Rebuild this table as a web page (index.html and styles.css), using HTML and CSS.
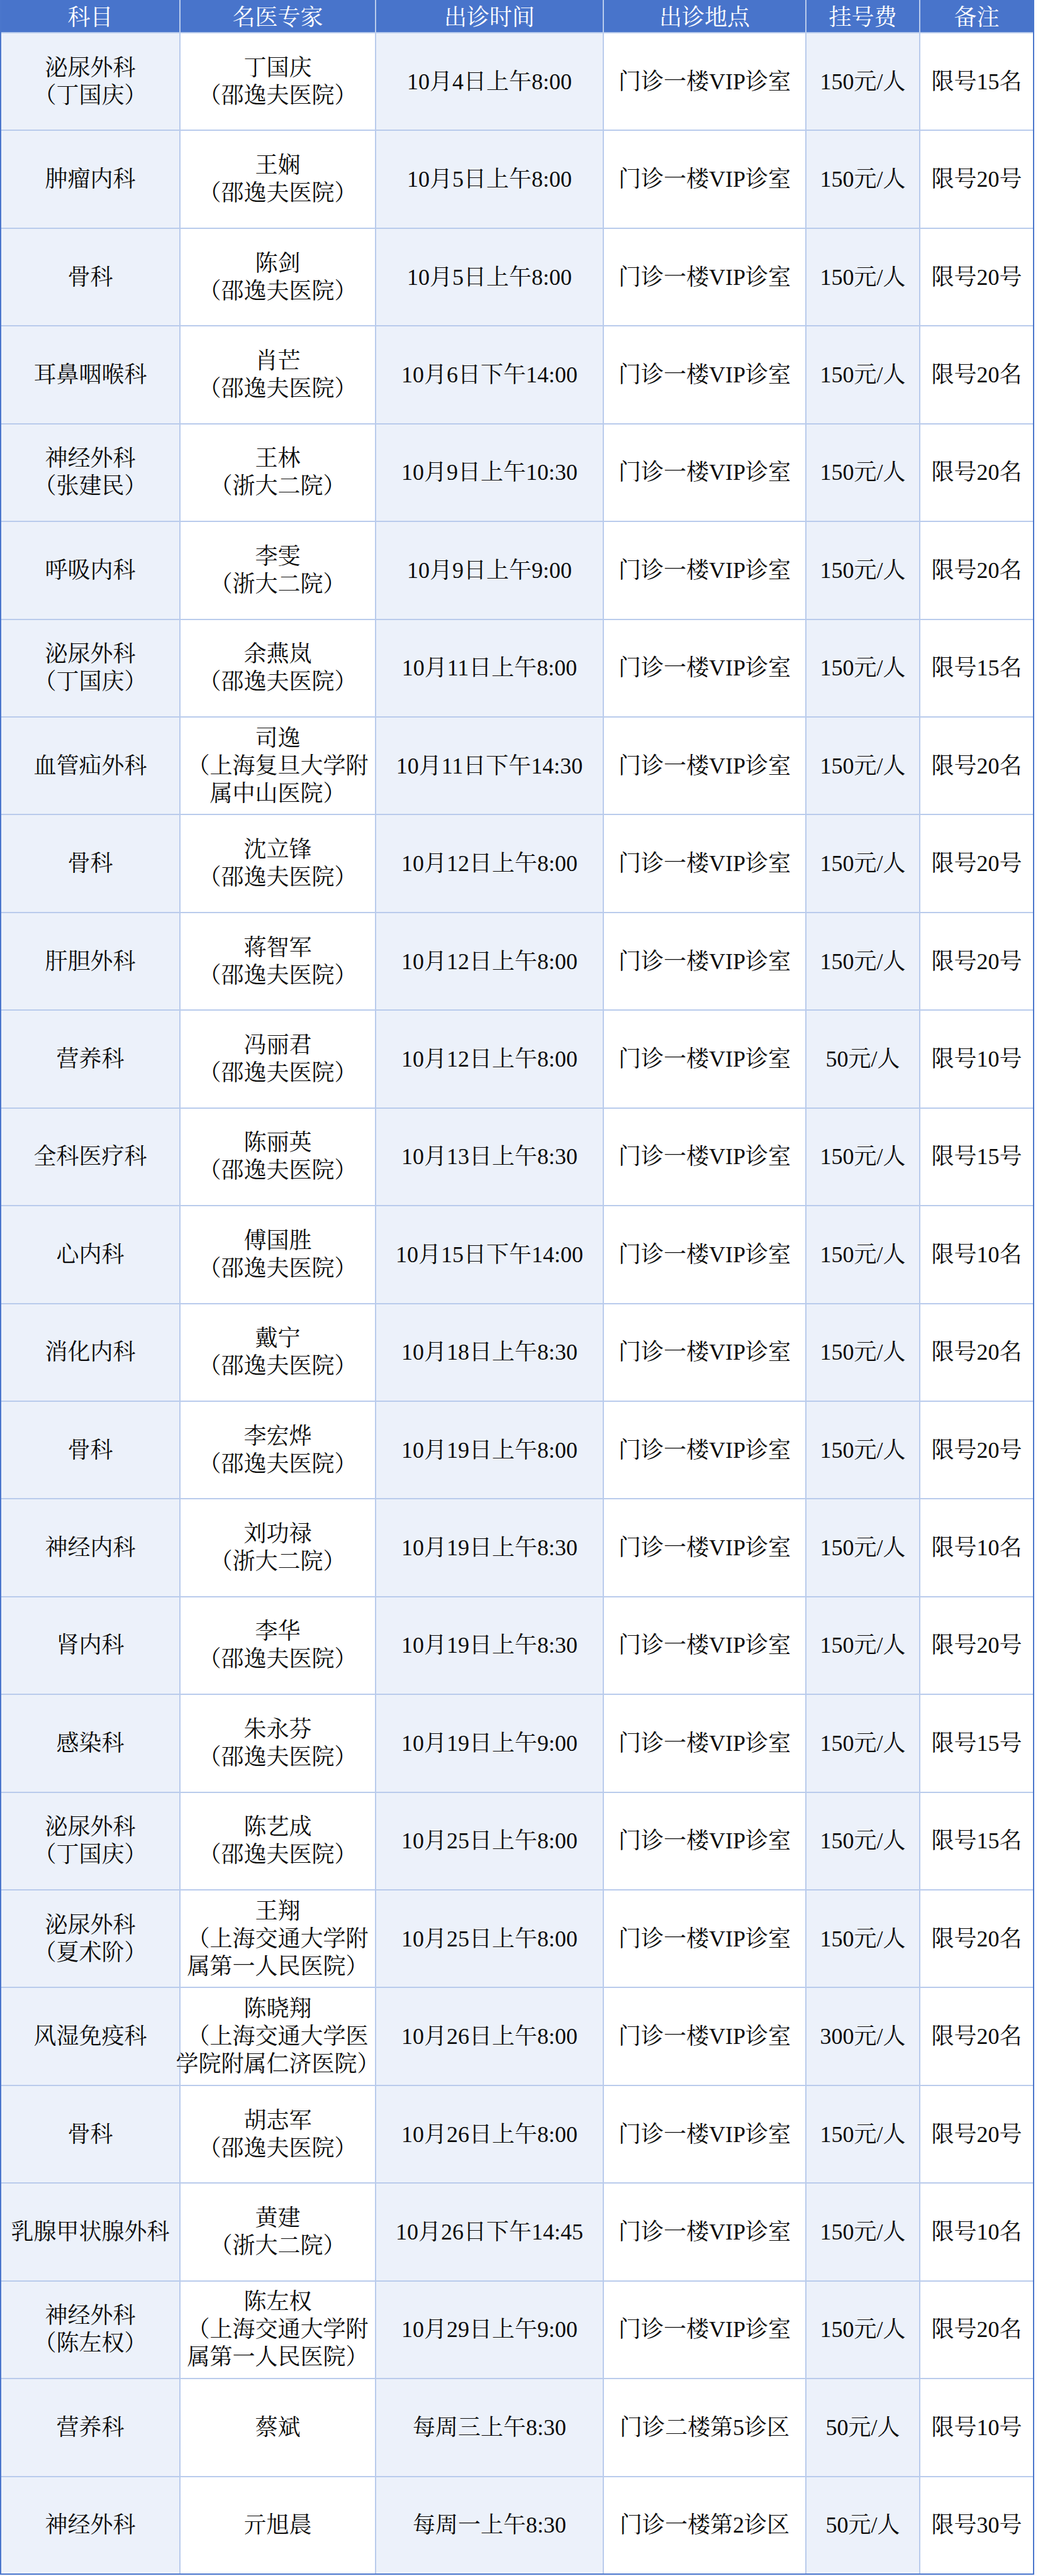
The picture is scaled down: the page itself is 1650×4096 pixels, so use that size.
FILE: index.html
```html
<!DOCTYPE html>
<html lang="zh-CN">
<head>
<meta charset="utf-8">
<title>名医专家出诊安排</title>
<link rel="stylesheet" href="styles.css">
</head>
<body>
<div class="schedule">
  <div class="row head">
    <div class="cell">科目</div>
    <div class="cell">名医专家</div>
    <div class="cell">出诊时间</div>
    <div class="cell">出诊地点</div>
    <div class="cell">挂号费</div>
    <div class="cell">备注</div>
  </div>

  <div class="row">
    <div class="cell"><span>泌尿外科<br>（丁国庆）</span></div>
    <div class="cell"><span>丁国庆<br>（邵逸夫医院）</span></div>
    <div class="cell"><span>10月4日上午8:00</span></div>
    <div class="cell"><span>门诊一楼VIP诊室</span></div>
    <div class="cell"><span>150元/人</span></div>
    <div class="cell"><span>限号15名</span></div>
  </div>
  <div class="row">
    <div class="cell"><span>肿瘤内科</span></div>
    <div class="cell"><span>王娴<br>（邵逸夫医院）</span></div>
    <div class="cell"><span>10月5日上午8:00</span></div>
    <div class="cell"><span>门诊一楼VIP诊室</span></div>
    <div class="cell"><span>150元/人</span></div>
    <div class="cell"><span>限号20号</span></div>
  </div>
  <div class="row">
    <div class="cell"><span>骨科</span></div>
    <div class="cell"><span>陈剑<br>（邵逸夫医院）</span></div>
    <div class="cell"><span>10月5日上午8:00</span></div>
    <div class="cell"><span>门诊一楼VIP诊室</span></div>
    <div class="cell"><span>150元/人</span></div>
    <div class="cell"><span>限号20号</span></div>
  </div>
  <div class="row">
    <div class="cell"><span>耳鼻咽喉科</span></div>
    <div class="cell"><span>肖芒<br>（邵逸夫医院）</span></div>
    <div class="cell"><span>10月6日下午14:00</span></div>
    <div class="cell"><span>门诊一楼VIP诊室</span></div>
    <div class="cell"><span>150元/人</span></div>
    <div class="cell"><span>限号20名</span></div>
  </div>
  <div class="row">
    <div class="cell"><span>神经外科<br>（张建民）</span></div>
    <div class="cell"><span>王林<br>（浙大二院）</span></div>
    <div class="cell"><span>10月9日上午10:30</span></div>
    <div class="cell"><span>门诊一楼VIP诊室</span></div>
    <div class="cell"><span>150元/人</span></div>
    <div class="cell"><span>限号20名</span></div>
  </div>
  <div class="row">
    <div class="cell"><span>呼吸内科</span></div>
    <div class="cell"><span>李雯<br>（浙大二院）</span></div>
    <div class="cell"><span>10月9日上午9:00</span></div>
    <div class="cell"><span>门诊一楼VIP诊室</span></div>
    <div class="cell"><span>150元/人</span></div>
    <div class="cell"><span>限号20名</span></div>
  </div>
  <div class="row">
    <div class="cell"><span>泌尿外科<br>（丁国庆）</span></div>
    <div class="cell"><span>余燕岚<br>（邵逸夫医院）</span></div>
    <div class="cell"><span>10月11日上午8:00</span></div>
    <div class="cell"><span>门诊一楼VIP诊室</span></div>
    <div class="cell"><span>150元/人</span></div>
    <div class="cell"><span>限号15名</span></div>
  </div>
  <div class="row">
    <div class="cell"><span>血管疝外科</span></div>
    <div class="cell"><span>司逸<br>（上海复旦大学附<br>属中山医院）</span></div>
    <div class="cell"><span>10月11日下午14:30</span></div>
    <div class="cell"><span>门诊一楼VIP诊室</span></div>
    <div class="cell"><span>150元/人</span></div>
    <div class="cell"><span>限号20名</span></div>
  </div>
  <div class="row">
    <div class="cell"><span>骨科</span></div>
    <div class="cell"><span>沈立锋<br>（邵逸夫医院）</span></div>
    <div class="cell"><span>10月12日上午8:00</span></div>
    <div class="cell"><span>门诊一楼VIP诊室</span></div>
    <div class="cell"><span>150元/人</span></div>
    <div class="cell"><span>限号20号</span></div>
  </div>
  <div class="row">
    <div class="cell"><span>肝胆外科</span></div>
    <div class="cell"><span>蒋智军<br>（邵逸夫医院）</span></div>
    <div class="cell"><span>10月12日上午8:00</span></div>
    <div class="cell"><span>门诊一楼VIP诊室</span></div>
    <div class="cell"><span>150元/人</span></div>
    <div class="cell"><span>限号20号</span></div>
  </div>
  <div class="row">
    <div class="cell"><span>营养科</span></div>
    <div class="cell"><span>冯丽君<br>（邵逸夫医院）</span></div>
    <div class="cell"><span>10月12日上午8:00</span></div>
    <div class="cell"><span>门诊一楼VIP诊室</span></div>
    <div class="cell"><span>50元/人</span></div>
    <div class="cell"><span>限号10号</span></div>
  </div>
  <div class="row">
    <div class="cell"><span>全科医疗科</span></div>
    <div class="cell"><span>陈丽英<br>（邵逸夫医院）</span></div>
    <div class="cell"><span>10月13日上午8:30</span></div>
    <div class="cell"><span>门诊一楼VIP诊室</span></div>
    <div class="cell"><span>150元/人</span></div>
    <div class="cell"><span>限号15号</span></div>
  </div>
  <div class="row">
    <div class="cell"><span>心内科</span></div>
    <div class="cell"><span>傅国胜<br>（邵逸夫医院）</span></div>
    <div class="cell"><span>10月15日下午14:00</span></div>
    <div class="cell"><span>门诊一楼VIP诊室</span></div>
    <div class="cell"><span>150元/人</span></div>
    <div class="cell"><span>限号10名</span></div>
  </div>
  <div class="row">
    <div class="cell"><span>消化内科</span></div>
    <div class="cell"><span>戴宁<br>（邵逸夫医院）</span></div>
    <div class="cell"><span>10月18日上午8:30</span></div>
    <div class="cell"><span>门诊一楼VIP诊室</span></div>
    <div class="cell"><span>150元/人</span></div>
    <div class="cell"><span>限号20名</span></div>
  </div>
  <div class="row">
    <div class="cell"><span>骨科</span></div>
    <div class="cell"><span>李宏烨<br>（邵逸夫医院）</span></div>
    <div class="cell"><span>10月19日上午8:00</span></div>
    <div class="cell"><span>门诊一楼VIP诊室</span></div>
    <div class="cell"><span>150元/人</span></div>
    <div class="cell"><span>限号20号</span></div>
  </div>
  <div class="row">
    <div class="cell"><span>神经内科</span></div>
    <div class="cell"><span>刘功禄<br>（浙大二院）</span></div>
    <div class="cell"><span>10月19日上午8:30</span></div>
    <div class="cell"><span>门诊一楼VIP诊室</span></div>
    <div class="cell"><span>150元/人</span></div>
    <div class="cell"><span>限号10名</span></div>
  </div>
  <div class="row">
    <div class="cell"><span>肾内科</span></div>
    <div class="cell"><span>李华<br>（邵逸夫医院）</span></div>
    <div class="cell"><span>10月19日上午8:30</span></div>
    <div class="cell"><span>门诊一楼VIP诊室</span></div>
    <div class="cell"><span>150元/人</span></div>
    <div class="cell"><span>限号20号</span></div>
  </div>
  <div class="row">
    <div class="cell"><span>感染科</span></div>
    <div class="cell"><span>朱永芬<br>（邵逸夫医院）</span></div>
    <div class="cell"><span>10月19日上午9:00</span></div>
    <div class="cell"><span>门诊一楼VIP诊室</span></div>
    <div class="cell"><span>150元/人</span></div>
    <div class="cell"><span>限号15号</span></div>
  </div>
  <div class="row">
    <div class="cell"><span>泌尿外科<br>（丁国庆）</span></div>
    <div class="cell"><span>陈艺成<br>（邵逸夫医院）</span></div>
    <div class="cell"><span>10月25日上午8:00</span></div>
    <div class="cell"><span>门诊一楼VIP诊室</span></div>
    <div class="cell"><span>150元/人</span></div>
    <div class="cell"><span>限号15名</span></div>
  </div>
  <div class="row">
    <div class="cell"><span>泌尿外科<br>（夏术阶）</span></div>
    <div class="cell"><span>王翔<br>（上海交通大学附<br>属第一人民医院）</span></div>
    <div class="cell"><span>10月25日上午8:00</span></div>
    <div class="cell"><span>门诊一楼VIP诊室</span></div>
    <div class="cell"><span>150元/人</span></div>
    <div class="cell"><span>限号20名</span></div>
  </div>
  <div class="row">
    <div class="cell"><span>风湿免疫科</span></div>
    <div class="cell"><span>陈晓翔<br>（上海交通大学医<br>学院附属仁济医院）</span></div>
    <div class="cell"><span>10月26日上午8:00</span></div>
    <div class="cell"><span>门诊一楼VIP诊室</span></div>
    <div class="cell"><span>300元/人</span></div>
    <div class="cell"><span>限号20名</span></div>
  </div>
  <div class="row">
    <div class="cell"><span>骨科</span></div>
    <div class="cell"><span>胡志军<br>（邵逸夫医院）</span></div>
    <div class="cell"><span>10月26日上午8:00</span></div>
    <div class="cell"><span>门诊一楼VIP诊室</span></div>
    <div class="cell"><span>150元/人</span></div>
    <div class="cell"><span>限号20号</span></div>
  </div>
  <div class="row">
    <div class="cell"><span>乳腺甲状腺外科</span></div>
    <div class="cell"><span>黄建<br>（浙大二院）</span></div>
    <div class="cell"><span>10月26日下午14:45</span></div>
    <div class="cell"><span>门诊一楼VIP诊室</span></div>
    <div class="cell"><span>150元/人</span></div>
    <div class="cell"><span>限号10名</span></div>
  </div>
  <div class="row">
    <div class="cell"><span>神经外科<br>（陈左权）</span></div>
    <div class="cell"><span>陈左权<br>（上海交通大学附<br>属第一人民医院）</span></div>
    <div class="cell"><span>10月29日上午9:00</span></div>
    <div class="cell"><span>门诊一楼VIP诊室</span></div>
    <div class="cell"><span>150元/人</span></div>
    <div class="cell"><span>限号20名</span></div>
  </div>
  <div class="row">
    <div class="cell"><span>营养科</span></div>
    <div class="cell"><span>蔡斌</span></div>
    <div class="cell"><span>每周三上午8:30</span></div>
    <div class="cell"><span>门诊二楼第5诊区</span></div>
    <div class="cell"><span>50元/人</span></div>
    <div class="cell"><span>限号10号</span></div>
  </div>
  <div class="row">
    <div class="cell"><span>神经外科</span></div>
    <div class="cell"><span>亓旭晨</span></div>
    <div class="cell"><span>每周一上午8:30</span></div>
    <div class="cell"><span>门诊一楼第2诊区</span></div>
    <div class="cell"><span>50元/人</span></div>
    <div class="cell"><span>限号30号</span></div>
  </div>
</div>
</body>
</html>
```

FILE: styles.css
```css
html, body {
  margin: 0;
  padding: 0;
  background: #ffffff;
}

body {
  font-family: "Liberation Serif", "Noto Serif CJK SC", "Noto Sans CJK SC", serif;
  color: #0a0a0a;
}

.schedule {
  display: grid;
  grid-template-columns: 283px 309px 360px 320px 179px 179px;
  grid-template-rows: 51px repeat(26, 1fr);
  column-gap: 2px;
  row-gap: 2px;
  width: 1640px;
  height: 4092px;
  background: #b9cbec;
  border-left: 2px solid #4a76cc;
  border-right: 2px solid #4a76cc;
  border-bottom: 2px solid #4a76cc;
}

.row {
  display: contents;
}

.cell {
  display: flex;
  align-items: center;
  justify-content: center;
  text-align: center;
  font-size: 36px;
  line-height: 44px;
  white-space: nowrap;
  min-width: 0;
  background: #ffffff;
}

.row > .cell:nth-child(odd) {
  background: #ecf1fa;
}

.row.head > .cell,
.row.head > .cell:nth-child(odd) {
  background: #4874cb;
  color: #ffffff;
  line-height: 40px;
  padding-top: 5px;
  box-sizing: border-box;
}
```
